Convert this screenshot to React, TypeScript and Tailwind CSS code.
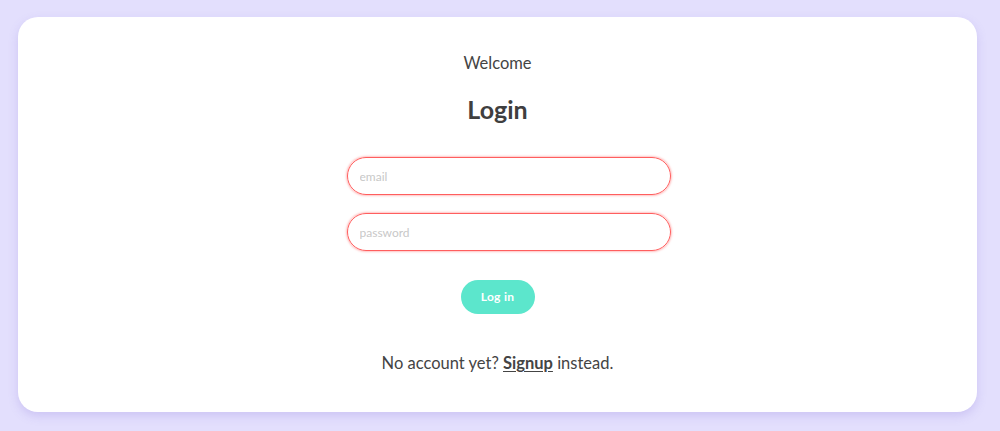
export default function App() {
  return (
    <div
      className="min-h-[431px] bg-[#e3dffd] pl-[18px] pt-[17px] pb-[20px]"
      style={{ fontFamily: "Lato, 'Noto Sans', sans-serif" }}
    >
      <div className="flex w-[959px] flex-col items-center rounded-[20px] bg-white pt-[34px] pb-[37px] shadow-[0_4px_10px_rgba(140,120,220,0.25)]">
        <p className="text-[16.5px] leading-6 text-[#444]">Welcome</p>
        <h1 className="mt-[18px] text-[25px] font-bold leading-8 text-[#3f3f3f]">Login</h1>
        <div className="mt-[32px] ml-[22px] flex flex-col gap-[18px]">
          <input
            type="text"
            placeholder="email"
            className="h-[38px] w-[324px] rounded-full border-[1.5px] border-[#ff5e5e] px-3 text-[12px] text-[#444] shadow-[0_0_2px_1px_rgba(255,120,120,0.45)] outline-none placeholder:text-[#c8c8c8]"
          />
          <input
            type="password"
            placeholder="password"
            className="h-[38px] w-[324px] rounded-full border-[1.5px] border-[#ff5e5e] px-3 text-[12px] text-[#444] shadow-[0_0_2px_1px_rgba(255,120,120,0.45)] outline-none placeholder:text-[#c8c8c8]"
          />
        </div>
        <button
          type="button"
          className="mt-[29px] h-[34px] w-[74px] rounded-full bg-[#5ce6cc] text-[12px] font-bold tracking-[0.3px] text-white"
        >
          Log in
        </button>
        <p className="mt-[37px] text-[16.5px] leading-6 text-[#444]">
          No account yet?{" "}
          <a href="#" className="font-bold underline underline-offset-2">
            Signup
          </a>{" "}
          instead.
        </p>
      </div>
    </div>
  );
}
